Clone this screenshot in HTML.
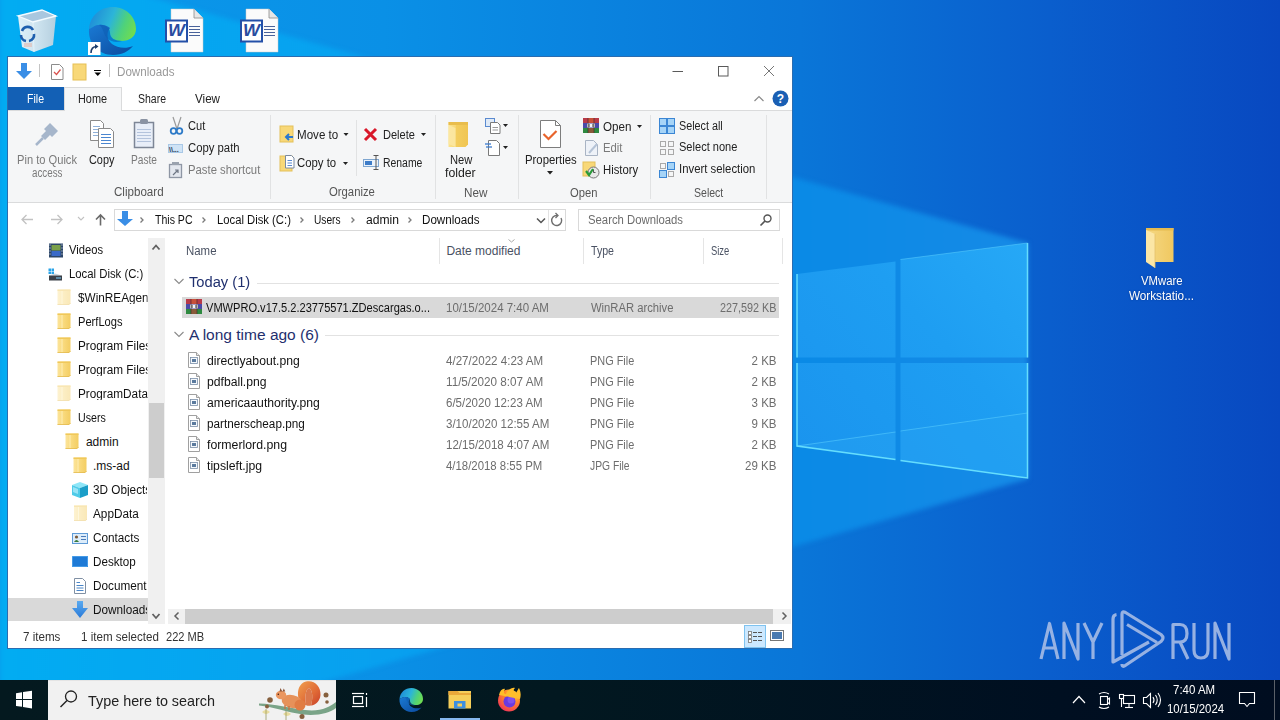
<!DOCTYPE html>
<html><head><meta charset="utf-8">
<style>
*{margin:0;padding:0;box-sizing:border-box}
html,body{width:1280px;height:720px;overflow:hidden;font-family:"Liberation Sans",sans-serif;font-size:12px;color:#000;background:#0a6fd6}
.a{position:absolute}
.t{position:absolute;white-space:nowrap;line-height:1;transform-origin:0 0}
svg.a{overflow:visible}
#bg{left:0;top:0;width:1280px;height:680px;background:#0a6ad6}
#win{left:7px;top:56px;width:786px;height:593px;background:#fff;border:1px solid #2a6cb0}
#filetab{left:8px;top:87px;width:56px;height:23px;background:#1360b5}
#hometab{left:64px;top:87px;width:58px;height:24px;background:#f5f6f7;border:1px solid #dadbdc;border-bottom:none}
#ribbon{left:8px;top:110px;width:784px;height:93px;background:#f5f6f7;border-top:1px solid #dadbdc;border-bottom:1px solid #dadbdc}
#hometabcover{left:65px;top:110px;width:56px;height:2px;background:#f5f6f7}
#navsb{left:148px;top:238px;width:17px;height:386px;background:#f0f0f0}
#navthumb{left:149px;top:403px;width:15px;height:75px;background:#cdcdcd}
#navsel{left:8px;top:598px;width:140px;height:23px;background:#d9d9d9}
#rowsel{left:182px;top:297px;width:597px;height:21px;background:#d9d9d9}
#hsb{left:168px;top:609px;width:623px;height:15px;background:#f0f0f0}
#hthumb{left:185px;top:609px;width:588px;height:15px;background:#cdcdcd}
#tb{left:0;top:680px;width:1280px;height:40px;background:linear-gradient(90deg,#04191f 0px,#021820 560px,#000f21 1060px,#000d20 1280px)}
</style></head><body>
<div id="bg" class="a"></div>

<svg class="a" style="left:0;top:0" width="1280" height="680" viewBox="0 0 1280 680">
<defs>
 <linearGradient id="pane" x1="0" y1="0" x2="1" y2="1">
  <stop offset="0" stop-color="#2cb2f8"/><stop offset="1" stop-color="#1890ee"/>
 </linearGradient>
 <linearGradient id="edge" x1="0" y1="0" x2="1" y2="0">
  <stop offset="0" stop-color="#1fa6f5"/><stop offset="1" stop-color="#1a8fe8"/>
 </linearGradient>
 <radialGradient id="glow" cx="880" cy="380" r="330" gradientUnits="userSpaceOnUse">
  <stop offset="0" stop-color="#3ab8ff" stop-opacity="0.45"/><stop offset="1" stop-color="#3ab8ff" stop-opacity="0"/>
 </radialGradient>
 <linearGradient id="edgeG" x1="0" y1="0" x2="0" y2="1">
  <stop offset="0" stop-color="#66e0ff"/><stop offset="1" stop-color="#4cc8ff"/>
 </linearGradient>
</defs>
<defs>
 <linearGradient id="outG" x1="0" y1="0" x2="1280" y2="0" gradientUnits="userSpaceOnUse">
  <stop offset="0" stop-color="#0a9aec"/><stop offset="0.3" stop-color="#0a90e6"/><stop offset="0.625" stop-color="#0a76d8"/><stop offset="0.82" stop-color="#0a5ecd"/><stop offset="1" stop-color="#0848c0"/>
 </linearGradient>
 <linearGradient id="inG" x1="0" y1="0" x2="1028" y2="0" gradientUnits="userSpaceOnUse">
  <stop offset="0" stop-color="#02acf2"/><stop offset="0.5" stop-color="#0a9cee"/><stop offset="0.78" stop-color="#0a8ae6"/><stop offset="1" stop-color="#168ae6"/>
 </linearGradient>
 <filter id="soft" x="-5%" y="-5%" width="110%" height="110%" color-interpolation-filters="sRGB"><feGaussianBlur stdDeviation="2.5"/></filter>
</defs>
<rect x="0" y="0" width="1280" height="680" fill="url(#outG)"/>
<polygon points="0,-45 1028,243 1028,479 0,775" fill="url(#inG)" filter="url(#soft)"/>
<!-- windows logo -->
<defs>
 <linearGradient id="paneG" x1="795" y1="460" x2="1028" y2="250" gradientUnits="userSpaceOnUse">
  <stop offset="0" stop-color="#1a94ee"/><stop offset="0.6" stop-color="#1e9ef2"/><stop offset="1" stop-color="#26a8f6"/>
 </linearGradient>
</defs>
<g>
<polygon points="797,274 895.5,261.5 895.5,357.5 797,357.5" fill="url(#paneG)"/>
<polygon points="900.5,259.5 1027.5,243 1027.5,357.5 900.5,357.5" fill="url(#paneG)"/>
<polygon points="797,363 895.5,363 895.5,459.5 797,446" fill="url(#paneG)"/>
<polygon points="900.5,363 1027.5,363 1027.5,478 900.5,460.5" fill="url(#paneG)"/>
<polygon points="797,446 895.5,432 895.5,459.5" fill="#2aa6f4" opacity="0.35"/>
<polygon points="900.5,431 1027.5,413 1027.5,478 900.5,460.5" fill="#2aa6f4" opacity="0.35"/>
<polyline points="797,446 895.5,432" stroke="#5fd4ff" stroke-width="1" fill="none" opacity="0.5"/>
<polyline points="900.5,431 1027.5,413" stroke="#5fd4ff" stroke-width="1" fill="none" opacity="0.5"/>
<g stroke="#6ee6ff" stroke-width="1.5" fill="none" opacity="0.9">
 <polyline points="797,274 797,357.5"/>
 <polyline points="797,363 797,446 895.5,459.5"/>
 <polyline points="1027.5,243 1027.5,357.5"/>
 <polyline points="1027.5,363 1027.5,478 900.5,460.5"/>
</g>
<polyline points="900.5,259.5 1027.5,243" stroke="#5fd4ff" stroke-width="1" fill="none" opacity="0.5"/>
</g>
<!-- recycle bin -->
<defs><linearGradient id="rbG" x1="0" y1="0" x2="1" y2="0"><stop offset="0" stop-color="#f2f6f9"/><stop offset="0.5" stop-color="#dfe8ef"/><stop offset="1" stop-color="#c4d2dd"/></linearGradient></defs>
<path d="M18,16 L42,10 L56,16 L53,45 L34,52 L22,47 Z" fill="url(#rbG)" opacity="0.92"/>
<path d="M18,16 L42,10 L56,16 L33,22 Z" fill="#a9c7df"/>
<path d="M18,16 L42,10 L56,16 L33,22 Z" fill="none" stroke="#f4fbff" stroke-width="1.3"/>
<path d="M33,22 L34,52" stroke="#f4fbff" stroke-width="0.8" opacity="0.7"/>
<path d="M22,31 A6,6 0 0 1 33,30" stroke="#1e5fae" stroke-width="2.6" fill="none"/>
<path d="M34,34 A6,6 0 0 1 29,41" stroke="#1e5fae" stroke-width="2.6" fill="none"/>
<path d="M26,41 A6,6 0 0 1 21,35" stroke="#1e5fae" stroke-width="2.6" fill="none"/>
<rect x="24" y="43" width="8" height="4" fill="#e8b0a0" opacity="0.5"/>
<!-- edge desktop -->
<defs>
 <linearGradient id="edA" x1="0" y1="0.3" x2="1" y2="0.6"><stop offset="0" stop-color="#1e8ad8"/><stop offset="0.45" stop-color="#2cb5d8"/><stop offset="0.75" stop-color="#4fd27a"/><stop offset="1" stop-color="#6fdc52"/></linearGradient>
 <linearGradient id="edB" x1="0" y1="0" x2="1" y2="1"><stop offset="0" stop-color="#1a7ad4"/><stop offset="1" stop-color="#0b4a9e"/></linearGradient>
 <g id="edgeIco">
  <path d="M1,22 C2,9 12,0 25,0 C38,0 48,10 48,22 C48,30 41,34 34,34 C27,34 22,31 22,26 C22,21 17,17 11,18 C6,19 2,22 1,22 Z" fill="url(#edA)"/>
  <path d="M1,22 C0,37 11,48 25,48 C34,48 41,44 45,39 C38,42 29,41 24,37 C19,33 18,26 22,21 C17,17 9,17 5,20 C3,21 1,22 1,22 Z" fill="url(#edB)"/>
  <path d="M11,18 C17,17 22,21 22,26 C22,31 27,34 34,34 C29,36 23,35 19,31 C15,27 16,21 11,18 Z" fill="#0e5fb4" opacity="0.6"/>
 </g>
</defs>
<use href="#edgeIco" x="88" y="7"/>
<rect x="88" y="42" width="12.5" height="13" fill="#fff"/>
<path d="M91,53 C91,48 93,46.5 97,46.5" stroke="#1c3c6c" stroke-width="1.6" fill="none"/>
<path d="M95,44 L98.5,46.5 L95,49 Z" fill="#1c3c6c"/>
<!-- word docs -->
<g id="wd1">
 <path d="M171,9 L194,9 L203,18 L203,52 L171,52 Z" fill="#fbfbfb" stroke="#c8c8c8" stroke-width="0.5"/>
 <path d="M194,9 L194,18 L203,18" fill="#e6e6e6" stroke="#8a8a8a" stroke-width="0.8"/>
 <rect x="166" y="20.5" width="21" height="21" fill="#fff" stroke="#2450a8" stroke-width="2"/>
 <text x="0" y="0" transform="translate(176.5,36.4) scale(1.12,1)" font-family="Liberation Sans" font-weight="bold" font-style="italic" font-size="16" fill="#2a4ca0" text-anchor="middle">W</text>
 <g stroke="#34508e" stroke-width="0.9"><line x1="189" y1="26.5" x2="200" y2="26.5"/><line x1="189" y1="29.5" x2="200" y2="29.5"/><line x1="189" y1="32.5" x2="200" y2="32.5"/><line x1="189" y1="35.5" x2="200" y2="35.5"/></g>
</g>
<use href="#wd1" x="75" y="0"/>
<!-- vmware folder -->
<defs><linearGradient id="vfG" x1="0" y1="0" x2="1" y2="0"><stop offset="0" stop-color="#f5d884"/><stop offset="1" stop-color="#f0c860"/></linearGradient></defs>
<path d="M1146,228 h27.5 v34 h-27.5 Z" fill="url(#vfG)"/>
<rect x="1146" y="228" width="27.5" height="2.5" fill="#e6bb50"/>
<path d="M1146,230 L1155,234 L1155,268 L1146,262 Z" fill="#fbe6a6"/>
<path d="M1155,234 L1155,268" stroke="#e4c06a" stroke-width="0.8"/>
<!-- anyrun -->
<g stroke="#a6bce6" stroke-width="3.2" fill="none" opacity="0.9" stroke-linejoin="round" stroke-linecap="butt">
 <path d="M1041,659 L1049.5,623.5 L1058,659 M1044.5,648 L1054.5,648"/>
 <path d="M1064,659 L1064,623 L1078,659 L1078,623"/>
 <path d="M1084,623 L1093,642 L1102,623 M1093,642 L1093,659"/>
 <path d="M1173,659 L1173,624.5 L1180,624.5 Q1187,624.5 1187,633.5 Q1187,642 1180,642 L1173,642 M1180,642 L1188,659"/>
 <path d="M1194,623 L1194,650 Q1194,658 1201,658 Q1208,658 1208,650 L1208,623"/>
 <path d="M1215,659 L1215,623 L1229,659 L1229,623"/>
 <path d="M1116.5,614.5 Q1113,615 1113,619 L1113,662 L1149,642"/>
 <path d="M1122,655 L1122,614 Q1122,610.5 1125.5,612.5 L1161,634.5 Q1165,638 1161,641.5 L1126,665 Q1122,668 1122,664"/>
 <path d="M1127,624.5 L1157,642.5"/>
</g>
</svg>

<div id="win" class="a"></div>
<div id="filetab" class="a"></div>
<div id="ribbon" class="a"></div>
<div id="hometab" class="a"></div>
<div id="hometabcover" class="a"></div>
<div id="navsb" class="a"></div>
<div id="navthumb" class="a"></div>
<div id="navsel" class="a"></div>
<div id="rowsel" class="a"></div>
<div id="hsb" class="a"></div>
<div id="hthumb" class="a"></div>
<div id="tb" class="a"></div>

<svg class="a" style="left:0;top:0" width="1280" height="720" viewBox="0 0 1280 720">
<!-- QAT -->
<path d="M21,63 h6 v8 h5 l-8,8 l-8,-8 h5 Z" fill="#3a8ee6"/>
<line x1="39.5" y1="64" x2="39.5" y2="77" stroke="#c4c4c4"/>
<path d="M51.5,64.5 h8 l3.5,3.5 v11.5 h-11.5 Z" fill="#fff" stroke="#8c8c8c"/>
<path d="M54,72 l2.5,2.5 l4,-5" stroke="#d9534f" stroke-width="1.3" fill="none"/>
<rect x="73" y="64" width="13" height="16" fill="#f8d878"/>
<rect x="73" y="64" width="13" height="16" fill="none" stroke="#e6bf55" stroke-width="1"/>
<line x1="94" y1="70.5" x2="101" y2="70.5" stroke="#000"/>
<path d="M94.5,72.5 h6.5 l-3.25,3.5 Z" fill="#000"/>
<line x1="109.5" y1="64" x2="109.5" y2="77" stroke="#c4c4c4"/>
<!-- title controls -->
<line x1="672.5" y1="71.5" x2="683" y2="71.5" stroke="#5a5a5a"/>
<rect x="718.5" y="66.5" width="9.5" height="9.5" fill="none" stroke="#5a5a5a"/>
<path d="M764,66 L774,76 M774,66 L764,76" stroke="#666" stroke-width="0.9"/>
<!-- collapse + help -->
<path d="M754.5,101 L759,96.5 L763.5,101" stroke="#8a8a8a" stroke-width="1.2" fill="none"/>
<circle cx="780.5" cy="98.5" r="8" fill="#1a5fb4"/>
<text x="780.5" y="103" font-family="Liberation Sans" font-weight="bold" font-size="12" fill="#fff" text-anchor="middle">?</text>
<!-- ribbon group separators -->
<g stroke="#e1e2e3">
 <line x1="270.5" y1="115" x2="270.5" y2="199"/>
 <line x1="435.5" y1="115" x2="435.5" y2="199"/>
 <line x1="518.5" y1="115" x2="518.5" y2="199"/>
 <line x1="650.5" y1="115" x2="650.5" y2="199"/>
 <line x1="766.5" y1="115" x2="766.5" y2="199"/>
 <line x1="356.5" y1="120" x2="356.5" y2="176"/>
</g>
<!-- pin -->
<path d="M44,129 L50,123 L58,131 L52,137 L50,135 L45,140 L41,136 L46,131 Z" fill="#a6b6cb"/>
<path d="M43,138 L36,145" stroke="#a6b6cb" stroke-width="2.5"/>
<!-- copy -->
<path d="M90.5,120.5 h10 l3,3 v17 h-13 Z" fill="#fff" stroke="#8a8a8a"/>
<g stroke="#8fb0d8" stroke-width="1"><line x1="93" y1="126.5" x2="100" y2="126.5"/><line x1="93" y1="129.5" x2="100" y2="129.5"/><line x1="93" y1="132.5" x2="100" y2="132.5"/><line x1="93" y1="135.5" x2="100" y2="135.5"/></g>
<path d="M98.5,128.5 h12 l3,3 v16 h-15 Z" fill="#fff" stroke="#8a8a8a"/>
<g stroke="#4a86d0" stroke-width="1"><line x1="101" y1="134.5" x2="111" y2="134.5"/><line x1="101" y1="137.5" x2="111" y2="137.5"/><line x1="101" y1="140.5" x2="111" y2="140.5"/><line x1="101" y1="143.5" x2="111" y2="143.5"/></g>
<!-- paste -->
<rect x="134.5" y="122.5" width="19" height="25" fill="#e8eef8" stroke="#7d8696" stroke-width="1.5"/>
<rect x="140" y="119" width="8" height="5" rx="1.5" fill="#8a93a3"/>
<g stroke="#b3c3dc"><line x1="137" y1="129.5" x2="151" y2="129.5"/><line x1="137" y1="132.5" x2="151" y2="132.5"/><line x1="137" y1="135.5" x2="151" y2="135.5"/><line x1="137" y1="138.5" x2="151" y2="138.5"/><line x1="137" y1="141.5" x2="151" y2="141.5"/></g>
<!-- cut -->
<path d="M173,117 L177,129 M181,117 L177,129" stroke="#9a9a9a" stroke-width="1.2"/>
<circle cx="173.5" cy="131" r="2.8" fill="none" stroke="#2e7bc8" stroke-width="1.8"/>
<circle cx="179.5" cy="131" r="2.8" fill="none" stroke="#2e7bc8" stroke-width="1.8"/>
<!-- copy path -->
<rect x="168.5" y="144.5" width="14" height="8" fill="#cfe3f5" stroke="#a9c8e6"/>
<text x="169" y="151.5" font-family="Liberation Sans" font-weight="bold" font-size="7" fill="#1d3550">\\...</text>
<!-- paste shortcut -->
<rect x="169.5" y="164.5" width="12" height="13" fill="#e3e7ee" stroke="#8e96a4" stroke-width="1.3"/>
<rect x="172" y="162" width="7" height="3" fill="#9aa2ae"/>
<path d="M173,175 L178,170 M175,170 h3 v3" stroke="#6e7684" stroke-width="1.2" fill="none"/>
<!-- move to -->
<rect x="280" y="126" width="13" height="16" fill="#f8d878" stroke="#e4c05a"/>
<path d="M293,137 h-7 M289,134 l-3,3 l3,3" stroke="#2a78d0" stroke-width="2" fill="none"/>
<path d="M343.5,133 h5 l-2.5,3 Z" fill="#222"/>
<!-- copy to -->
<rect x="280" y="156" width="12" height="15" fill="#f8d878" stroke="#e4c05a"/>
<path d="M285.5,155.5 h6 l2.5,2.5 v10 h-8.5 Z" fill="#fff" stroke="#7a8aa0"/>
<g stroke="#5a8ad0"><line x1="287.5" y1="160.5" x2="292" y2="160.5"/><line x1="287.5" y1="163" x2="292" y2="163"/><line x1="287.5" y1="165.5" x2="292" y2="165.5"/></g>
<path d="M343,162 h5 l-2.5,3 Z" fill="#222"/>
<!-- delete -->
<path d="M365,129 L376,140 M376,129 L365,140" stroke="#d9182a" stroke-width="3"/>
<path d="M421,133 h5 l-2.5,3 Z" fill="#222"/>
<!-- rename -->
<rect x="363.5" y="159.5" width="15" height="7" fill="#eaf2fb" stroke="#7fa6d0"/>
<rect x="365" y="161" width="7" height="4" fill="#3d7cc8"/>
<path d="M376,155 v15 M373.5,155.5 h5 M373.5,169.5 h5" stroke="#555" stroke-width="1"/>
<!-- new folder -->
<defs><linearGradient id="nfG" x1="0" y1="0" x2="1" y2="0"><stop offset="0" stop-color="#fbe38e"/><stop offset="0.35" stop-color="#f7d877"/><stop offset="0.4" stop-color="#f3cd5e"/><stop offset="1" stop-color="#f0c552"/></linearGradient></defs>
<path d="M448.5,122 h19.5 v22.5 l-2.5,2.5 h-17 Z" fill="url(#nfG)"/>
<rect x="448.5" y="122" width="19.5" height="3" fill="#e9bd4c"/>
<path d="M448.5,125 L455.5,128 L455.5,147 L448.5,144 Z" fill="#fce8a4" opacity="0.85"/>
<!-- new item -->
<rect x="485.5" y="118.5" width="9" height="8" fill="#dfeaf7" stroke="#5a8ad0"/>
<path d="M490.5,122.5 h7 l2.5,2.5 v8.5 h-9.5 Z" fill="#fff" stroke="#7a7a7a"/>
<g stroke="#999"><line x1="492.5" y1="127.5" x2="498" y2="127.5"/><line x1="492.5" y1="130" x2="498" y2="130"/></g>
<path d="M503,124 h5 l-2.5,3 Z" fill="#222"/>
<!-- easy access -->
<path d="M488.5,140.5 h8 l3,3 v12 h-11 Z" fill="#fff" stroke="#7a7a7a"/>
<g stroke="#3a7ad0" stroke-width="1.3"><line x1="485" y1="144" x2="491" y2="144"/><line x1="486" y1="147" x2="492" y2="147"/></g>
<path d="M503,146 h5 l-2.5,3 Z" fill="#222"/>
<!-- properties -->
<path d="M540.5,120.5 h15 l5,5 v22 h-20 Z" fill="#fff" stroke="#7d7d7d"/>
<path d="M555.5,120.5 v5 h5" fill="none" stroke="#7d7d7d"/>
<path d="M543.5,134 l5,5 l8,-8" stroke="#e8642c" stroke-width="2.2" fill="none"/>
<path d="M547,171 h6 l-3,3.5 Z" fill="#222"/>
<!-- winrar open -->
<defs><g id="rar">
 <rect x="0" y="0" width="16" height="5" fill="#b83a48"/>
 <rect x="0" y="5" width="16" height="5" fill="#4a4aa8"/>
 <rect x="0" y="10" width="16" height="5" fill="#2e8a40"/>
 <rect x="5" y="0" width="6" height="5" fill="#c8503a"/>
 <rect x="5" y="10" width="6" height="5" fill="#8a5a3a"/>
 <rect x="4" y="5.5" width="8" height="4" fill="#f4f4f4"/>
 <rect x="5.5" y="6" width="1" height="3" fill="#333"/><rect x="9.5" y="6" width="1" height="3" fill="#333"/>
 <path d="M5,0 v15 M11,0 v15" stroke="#3a2a2a" stroke-width="0.6"/>
</g></defs>
<use href="#rar" x="583" y="118"/>
<path d="M637,125 h5 l-2.5,3 Z" fill="#222"/>
<!-- edit -->
<path d="M585.5,140.5 h8 l4,4 v11 h-12 Z" fill="#eef2f8" stroke="#a9b4c4"/>
<path d="M589,153 L597,144" stroke="#b5c3d6" stroke-width="2"/>
<!-- history -->
<rect x="583" y="162" width="12" height="14" fill="#f8d878" stroke="#e4c05a"/>
<circle cx="593.5" cy="172.5" r="5.5" fill="#e8e8e8" stroke="#777" stroke-width="1"/>
<path d="M593.5,169.5 v3 h2" stroke="#555" fill="none"/>
<path d="M586,171 l3,4 l4,-6" stroke="#2a9a3a" stroke-width="2.2" fill="none"/>
<!-- select all -->
<g fill="#a6d4f7" stroke="#3b86d4"><rect x="659.5" y="118.5" width="7" height="7"/><rect x="667.5" y="118.5" width="7" height="7"/><rect x="659.5" y="126.5" width="7" height="7"/><rect x="667.5" y="126.5" width="7" height="7"/></g>
<g fill="none" stroke="#a9a9a9"><rect x="660.5" y="141.5" width="5" height="5"/><rect x="668.5" y="141.5" width="5" height="5"/><rect x="660.5" y="149.5" width="5" height="5"/><rect x="668.5" y="149.5" width="5" height="5"/></g>
<g fill="#a6d4f7" stroke="#3b86d4"><rect x="667.5" y="162.5" width="7" height="7"/><rect x="659.5" y="170.5" width="7" height="7"/></g>
<g fill="none" stroke="#a9a9a9"><rect x="660.5" y="163.5" width="5" height="5"/><rect x="668.5" y="171.5" width="5" height="5"/></g>
<!-- address row -->
<path d="M22,219.5 h11 M26.5,215 l-4.5,4.5 l4.5,4.5" stroke="#c2c2c2" stroke-width="1.3" fill="none"/>
<path d="M51,219.5 h11 M57.5,215 l4.5,4.5 l-4.5,4.5" stroke="#c2c2c2" stroke-width="1.3" fill="none"/>
<path d="M78,217 l3,3 l3,-3" stroke="#c2c2c2" stroke-width="1.1" fill="none"/>
<path d="M100.5,225.5 v-10 M96,219.5 l4.5,-4.5 l4.5,4.5" stroke="#6a6a6a" stroke-width="1.6" fill="none"/>
<rect x="114.5" y="209.5" width="451" height="21" fill="none" stroke="#d9d9d9"/>
<line x1="548.5" y1="210" x2="548.5" y2="230" stroke="#e3e3e3"/>
<path d="M122,211 h6 v8 h5 l-8,7 l-8,-7 h5 Z" fill="#3a8ee6"/>
<g stroke="#7a7a7a" stroke-width="1.3" fill="none">
 <path d="M140.5,217.5 l2.5,2.5 l-2.5,2.5"/><path d="M202.5,217.5 l2.5,2.5 l-2.5,2.5"/><path d="M300.5,217.5 l2.5,2.5 l-2.5,2.5"/><path d="M351.5,217.5 l2.5,2.5 l-2.5,2.5"/><path d="M408.5,217.5 l2.5,2.5 l-2.5,2.5"/>
</g>
<path d="M537,218.5 l4,4 l4,-4" stroke="#555" stroke-width="1.5" fill="none"/>
<path d="M561,218 A5,5 0 1 1 557,215.5" stroke="#6e6e6e" stroke-width="1.4" fill="none"/>
<path d="M555.5,213 l2.5,2.5 l-2.5,2.5" stroke="#6e6e6e" stroke-width="1.3" fill="none"/>
<rect x="578.5" y="209.5" width="201" height="21" fill="none" stroke="#d9d9d9"/>
<circle cx="767.5" cy="218.5" r="3.5" fill="none" stroke="#555" stroke-width="1.4"/>
<path d="M765,221 L760.5,225.5" stroke="#555" stroke-width="1.6"/>
<!-- column header separators -->
<g stroke="#e5e5e5"><line x1="439.5" y1="238" x2="439.5" y2="264"/><line x1="583.5" y1="238" x2="583.5" y2="264"/><line x1="703.5" y1="238" x2="703.5" y2="264"/><line x1="782.5" y1="238" x2="782.5" y2="264"/></g>
<path d="M508.5,239.5 l3,2.5 l3,-2.5" stroke="#aaa" fill="none"/>
<!-- group headers -->
<path d="M174.5,279 l4.5,4.5 l4.5,-4.5" stroke="#8a8a8a" stroke-width="1.1" fill="none"/>
<line x1="257" y1="283.5" x2="779" y2="283.5" stroke="#e2e2e2"/>
<path d="M174.5,332 l4.5,4.5 l4.5,-4.5" stroke="#8a8a8a" stroke-width="1.1" fill="none"/>
<line x1="325" y1="335.5" x2="779" y2="335.5" stroke="#e2e2e2"/>
<!-- winrar row icon -->
<use href="#rar" x="186" y="299"/>
<!-- file icons -->
<g id="fic">
 <path d="M188.5,352.5 h8 l3,3 v12 h-11 Z" fill="#fff" stroke="#a0a0a0"/>
 <path d="M196.5,352.5 v3 h3" fill="#e8e8e8" stroke="#a0a0a0"/>
 <rect x="190.5" y="357.5" width="7" height="6" fill="#f4f8fc" stroke="#7a8ea8" stroke-width="0.8"/>
 <rect x="192" y="359" width="4" height="3" fill="#5a7a9e"/>
</g>
<use href="#fic" y="21"/><use href="#fic" y="42"/><use href="#fic" y="63"/><use href="#fic" y="84"/><use href="#fic" y="105"/>
<!-- nav scrollbar arrows -->
<path d="M152.5,249.5 l3.5,-4 l3.5,4" stroke="#606060" stroke-width="1.8" fill="none"/>
<path d="M152.5,614 l3.5,4 l3.5,-4" stroke="#606060" stroke-width="1.8" fill="none"/>
<!-- h scrollbar arrows -->
<path d="M178.5,612.5 l-3.5,3.5 l3.5,3.5" stroke="#606060" stroke-width="1.5" fill="none"/>
<path d="M782.5,612.5 l3.5,3.5 l-3.5,3.5" stroke="#606060" stroke-width="1.5" fill="none"/>
<!-- nav icons -->
<defs>
 <linearGradient id="fldG" x1="0" y1="0" x2="1" y2="0"><stop offset="0" stop-color="#fce49a"/><stop offset="0.45" stop-color="#f9da7e"/><stop offset="1" stop-color="#f3cd62"/></linearGradient>
 <g id="fld">
  <path d="M0,0 h13 v14 l-1.5,1.5 h-11.5 Z" fill="url(#fldG)"/>
  <path d="M0,0 h13 v1.5 h-13 Z" fill="#f0c85a"/>
  <path d="M4.5,1.5 v13.5" stroke="#fff2c0" stroke-width="0.8"/>
  <path d="M0,15 h11.5 l1.5,-1.5" stroke="#e3bb52" stroke-width="0.8" fill="none"/>
 </g>
 <g id="fldp" opacity="0.45"><use href="#fld"/></g>
</defs>
<!-- videos -->
<rect x="49" y="243.5" width="14" height="14" fill="#2d4668"/>
<rect x="51.5" y="245" width="9" height="5.5" fill="#7aa04a"/>
<rect x="51.5" y="251" width="9" height="5" fill="#3a6ac8"/>
<g fill="#e8eef5"><rect x="49.5" y="244.5" width="1" height="1"/><rect x="49.5" y="247.5" width="1" height="1"/><rect x="49.5" y="250.5" width="1" height="1"/><rect x="49.5" y="253.5" width="1" height="1"/><rect x="61.5" y="244.5" width="1" height="1"/><rect x="61.5" y="247.5" width="1" height="1"/><rect x="61.5" y="250.5" width="1" height="1"/><rect x="61.5" y="253.5" width="1" height="1"/></g>
<!-- local disk -->
<g fill="#29a3e8"><rect x="48.5" y="268.5" width="2.5" height="2.5"/><rect x="51.5" y="268.5" width="2.5" height="2.5"/><rect x="48.5" y="271.5" width="2.5" height="2.5"/><rect x="51.5" y="271.5" width="2.5" height="2.5"/></g>
<path d="M49,275.5 L55,273.5 L62,275.5 Z" fill="#c9d3dc"/>
<rect x="49" y="275.5" width="13" height="5" fill="#3b4048"/>
<rect x="56" y="277.5" width="5" height="1" fill="#7fd0ff"/>
<use href="#fldp" x="57.5" y="289.5"/>
<use href="#fld" x="57.5" y="313.5"/>
<use href="#fld" x="57.5" y="337.5"/>
<use href="#fld" x="57.5" y="361.5"/>
<use href="#fldp" x="57.5" y="385.5"/>
<use href="#fld" x="57.5" y="409.5"/>
<use href="#fld" x="65.5" y="433.5"/>
<use href="#fld" x="73.5" y="457.5"/>
<use href="#fldp" x="74" y="505.5"/>
<!-- 3d objects -->
<path d="M72,485 L80,482 L88,485 L80,488 Z" fill="#8ee6f8"/>
<path d="M72,485 L80,488 L80,498 L72,495 Z" fill="#4fcbe8"/>
<path d="M80,488 L88,485 L88,495 L80,498 Z" fill="#1a9ec8"/>
<path d="M73,487 L78,489 L78,494 L73,492 Z" fill="#c8f4ff" opacity="0.6"/>
<!-- contacts -->
<rect x="72.5" y="533.5" width="15" height="10" fill="#dcecfa" stroke="#5e9ad6"/>
<circle cx="76.5" cy="537" r="1.6" fill="#7a5a3a"/>
<path d="M74,542 q2.5,-4 5,0 Z" fill="#3a7a3a"/>
<g stroke="#4a7ab8"><line x1="81" y1="536.5" x2="86" y2="536.5"/><line x1="81" y1="539.5" x2="86" y2="539.5"/></g>
<!-- desktop -->
<rect x="72" y="556" width="16" height="11" fill="#1e7ad6"/>
<rect x="72.5" y="556.5" width="15" height="10" fill="none" stroke="#5fb0f0" stroke-width="0.6"/>
<!-- documents -->
<path d="M74.5,578.5 h8 l3,3 v12 h-11 Z" fill="#fff" stroke="#8090a4"/>
<g stroke="#4a86c8"><line x1="76.5" y1="582.5" x2="80" y2="582.5"/><line x1="76.5" y1="585.5" x2="83.5" y2="585.5"/><line x1="76.5" y1="588" x2="83.5" y2="588"/><line x1="76.5" y1="590.5" x2="83.5" y2="590.5"/></g>
<!-- downloads arrow -->
<defs><linearGradient id="dlG" x1="0" y1="0" x2="0" y2="1"><stop offset="0" stop-color="#5aaaf0"/><stop offset="1" stop-color="#2a7ad8"/></linearGradient></defs>
<path d="M77,601 h6 v7 h5 l-8,10 l-8,-10 h5 Z" fill="url(#dlG)"/>
<!-- view buttons -->
<rect x="744.5" y="625.5" width="21" height="22" fill="#cce8ff" stroke="#7fc3f0"/>
<g fill="#fff" stroke="#777" stroke-width="0.8"><rect x="748.5" y="631.5" width="3" height="3"/><rect x="748.5" y="635.5" width="3" height="3"/><rect x="748.5" y="639.5" width="3" height="3"/></g>
<g stroke="#555"><line x1="753" y1="632.5" x2="757" y2="632.5"/><line x1="758" y1="632.5" x2="762" y2="632.5"/><line x1="753" y1="636.5" x2="757" y2="636.5"/><line x1="758" y1="636.5" x2="762" y2="636.5"/><line x1="753" y1="640.5" x2="757" y2="640.5"/><line x1="758" y1="640.5" x2="762" y2="640.5"/></g>
<rect x="770.5" y="630.5" width="13" height="10" fill="#fff" stroke="#777"/>
<rect x="772" y="632" width="10" height="7" fill="#4a7ab0"/>
</svg>

<svg class="a" style="left:0;top:680px" width="1280" height="40" viewBox="0 680 1280 40">
<g fill="#fff"><polygon points="16,693.2 22,692.3 22,699 16,699"/><polygon points="23,692.1 32,690.8 32,699 23,699"/><polygon points="16,700 22,700 22,706.8 16,706"/><polygon points="23,700 32,700 32,708.4 23,707.1"/></g>
<rect x="48" y="680" width="288" height="40" fill="#f1f1f1"/>
<rect x="48" y="680" width="288" height="1" fill="#e4e4e4"/>
<circle cx="71" cy="696.5" r="5.5" fill="none" stroke="#222" stroke-width="1.3"/>
<path d="M67,700.5 L60.5,707" stroke="#222" stroke-width="1.4"/>
<!-- squirrel doodle -->
<defs><linearGradient id="tailG" x1="0" y1="0" x2="1" y2="1"><stop offset="0" stop-color="#f0a050"/><stop offset="0.6" stop-color="#e06a36"/><stop offset="1" stop-color="#c8402a"/></linearGradient></defs>
<path d="M259,703.5 C275,704 290,708 305,710 C320,712 330,707 336,702 L336,708 C330,713 318,716 303,714.5 C288,712.5 274,707 259,705.5 Z" fill="#7aa488"/>
<path d="M301,704 C296,696 297,684 306,681.5 C314,679.5 321,686 320.5,695 C320,701 316,705 311,705.5 C313,699 313,690 309,688 C305,690 305,698 306,705 Z" fill="url(#tailG)"/>
<path d="M309,688 C313,690 313,699 311,705.5 C308,706 306,705.5 306,705 C305,698 305,690 309,688 Z" fill="#d86a3a" opacity="0.9"/>
<ellipse cx="292" cy="701.5" rx="10.5" ry="6.5" fill="#e6915a" transform="rotate(12 292 701.5)"/>
<circle cx="300" cy="705" r="5.5" fill="#e07c44"/>
<ellipse cx="281" cy="695" rx="5.2" ry="4.2" fill="#ea9660"/>
<path d="M279.5,691.5 l1,-3.5 l1.8,3.5 Z M282.5,691.5 l1.3,-3 l1.5,3 Z" fill="#8a5438"/>
<circle cx="278.3" cy="694.3" r="0.8" fill="#3a1a10"/>
<path d="M285,705 v4 M289,706 v4" stroke="#c87040" stroke-width="1.3"/>
<circle cx="270" cy="700" r="2.8" fill="#86603e"/><circle cx="267" cy="706.5" r="2" fill="#86603e"/><circle cx="326" cy="695" r="2.5" fill="#86603e"/><circle cx="302" cy="716.5" r="2.5" fill="#86603e"/><circle cx="327" cy="702" r="1.8" fill="#86603e"/>
<path d="M262,712 q4,-4 8,0 q-4,4 -8,0 Z M283,714 q4,-4 8,0 q-4,4 -8,0 Z" fill="#e6d890" opacity="0.85"/>
<path d="M266,709 v11 M286,711 v9" stroke="#9a9a60" stroke-width="0.8"/>
<!-- task view -->
<g stroke="#fff" stroke-width="1.2" fill="none"><rect x="353.5" y="696.5" width="9" height="7"/><line x1="352" y1="693.5" x2="364" y2="693.5"/><line x1="352" y1="706.5" x2="364" y2="706.5"/><line x1="366.5" y1="693" x2="366.5" y2="695"/><line x1="366.5" y1="697" x2="366.5" y2="707"/></g>
<!-- edge taskbar -->
<use href="#edgeIco" transform="translate(399,688) scale(0.5)"/>
<!-- explorer -->
<rect x="448.5" y="691" width="22.5" height="17.5" fill="#f6cf5a"/>
<path d="M448.5,691 h9 l2,2 h11.5 v2 h-22.5 Z" fill="#e9a93a"/>
<rect x="454" y="701" width="11.5" height="7.5" fill="#3d8fe0"/>
<rect x="457.5" y="703.5" width="4.5" height="3" fill="#f6cf5a"/>
<rect x="440" y="718" width="40" height="2" fill="#86b8ee"/>
<!-- firefox -->
<defs><radialGradient id="ffG" cx="0.7" cy="0.2" r="0.9"><stop offset="0" stop-color="#ffd43a"/><stop offset="0.45" stop-color="#ff8a2a"/><stop offset="1" stop-color="#f0305a"/></radialGradient></defs>
<circle cx="509" cy="700.5" r="11" fill="url(#ffG)"/>
<circle cx="509.5" cy="701.5" r="6" fill="#6a3ae0"/>
<circle cx="511" cy="700" r="3.5" fill="#8a5af0" opacity="0.7"/>
<path d="M499,695 C500,690 503,688 505,689 C503,692 504,694 506,694 C508,689 513,687 515,688 C513,690 513,692 516,693 C518,690 518,689 519,688 C521,692 521,696 520,699 Z" fill="#ffbe2a"/>
<!-- tray -->
<path d="M1073,703 l6,-6.5 l6,6.5" stroke="#fff" stroke-width="1.2" fill="none"/>
<g stroke="#fff" stroke-width="1.1" fill="none">
 <rect x="1100.5" y="696.5" width="7" height="8"/><path d="M1107.5,699.5 l2,-1.5 v6 l-2,-1.5"/>
 <path d="M1099,694 q5,-3 10,0 M1099,707 q5,3 10,0"/>
 <rect x="1123.5" y="695.5" width="11" height="8"/><line x1="1129" y1="704" x2="1129" y2="707"/><line x1="1125" y1="707.5" x2="1133" y2="707.5"/>
 <rect x="1119.5" y="694.5" width="4" height="4"/><line x1="1121.5" y1="699" x2="1121.5" y2="707"/>
 <path d="M1143.5,697.5 h3 l4,-4 v14 l-4,-4 h-3 Z"/>
 <path d="M1153,697 q2,3 0,6 M1155.5,695 q3.5,5 0,10 M1158,693 q5,7 0,14"/>
 <path d="M1239.5,692.5 h15 v11 h-5 l-2.5,3 l-2.5,-3 h-5 Z"/>
</g>
<line x1="1274.5" y1="680" x2="1274.5" y2="720" stroke="#5a6068"/>
</svg>

<div class="t" id="t0" style="left:117px;top:65.84px;font-size:12px;color:#9a9a9a;transform:scaleX(0.9684);">Downloads</div>
<div class="t" id="t1" style="left:27px;top:92.84px;font-size:12px;color:#fff;transform:scaleX(0.8788);">File</div>
<div class="t" id="t2" style="left:78px;top:92.84px;font-size:12px;color:#222;transform:scaleX(0.9058);">Home</div>
<div class="t" id="t3" style="left:137.5px;top:92.84px;font-size:12px;color:#222;transform:scaleX(0.8741);">Share</div>
<div class="t" id="t4" style="left:195px;top:92.84px;font-size:12px;color:#222;transform:scaleX(0.9691);">View</div>
<div class="t" id="t5" style="left:16.75px;top:153.84px;font-size:12px;color:#7a7a7a;transform:scaleX(0.9273);">Pin to Quick</div>
<div class="t" id="t6" style="left:31.75px;top:166.84px;font-size:12px;color:#7a7a7a;transform:scaleX(0.8164);">access</div>
<div class="t" id="t7" style="left:88.6px;top:153.84px;font-size:12px;color:#222;transform:scaleX(0.9066);">Copy</div>
<div class="t" id="t8" style="left:130.5px;top:153.84px;font-size:12px;color:#7a7a7a;transform:scaleX(0.8473);">Paste</div>
<div class="t" id="t9" style="left:187.7px;top:119.84px;font-size:12px;color:#222;transform:scaleX(0.9258);">Cut</div>
<div class="t" id="t10" style="left:187.7px;top:141.84px;font-size:12px;color:#222;transform:scaleX(0.9433);">Copy path</div>
<div class="t" id="t11" style="left:187.7px;top:163.84px;font-size:12px;color:#7a7a7a;transform:scaleX(0.9424);">Paste shortcut</div>
<div class="t" id="t12" style="left:113.7px;top:186.34px;font-size:12px;color:#555;transform:scaleX(0.9655);">Clipboard</div>
<div class="t" id="t13" style="left:297.2px;top:128.84px;font-size:12px;color:#222;transform:scaleX(0.9652);">Move to</div>
<div class="t" id="t14" style="left:297.2px;top:157.34px;font-size:12px;color:#222;transform:scaleX(0.9478);">Copy to</div>
<div class="t" id="t15" style="left:382.6px;top:128.84px;font-size:12px;color:#222;transform:scaleX(0.9196);">Delete</div>
<div class="t" id="t16" style="left:382.6px;top:157.34px;font-size:12px;color:#222;transform:scaleX(0.8686);">Rename</div>
<div class="t" id="t17" style="left:328.5px;top:186.34px;font-size:12px;color:#555;transform:scaleX(0.9424);">Organize</div>
<div class="t" id="t18" style="left:449.6px;top:154.34px;font-size:12px;color:#222;transform:scaleX(0.9327);">New</div>
<div class="t" id="t19" style="left:445.3px;top:166.84px;font-size:12px;color:#222;transform:scaleX(1.0223);">folder</div>
<div class="t" id="t20" style="left:464px;top:186.84px;font-size:12px;color:#555;transform:scaleX(0.9744);">New</div>
<div class="t" id="t21" style="left:525px;top:154.34px;font-size:12px;color:#222;transform:scaleX(0.9451);">Properties</div>
<div class="t" id="t22" style="left:602.5px;top:120.54px;font-size:12px;color:#222;transform:scaleX(0.9673);">Open</div>
<div class="t" id="t23" style="left:602.5px;top:142.34px;font-size:12px;color:#7a7a7a;transform:scaleX(0.9426);">Edit</div>
<div class="t" id="t24" style="left:602.5px;top:163.64px;font-size:12px;color:#222;transform:scaleX(0.9426);">History</div>
<div class="t" id="t25" style="left:570px;top:186.84px;font-size:12px;color:#555;transform:scaleX(0.9333);">Open</div>
<div class="t" id="t26" style="left:678.6px;top:119.54px;font-size:12px;color:#222;transform:scaleX(0.8973);">Select all</div>
<div class="t" id="t27" style="left:678.6px;top:141.34px;font-size:12px;color:#222;transform:scaleX(0.9213);">Select none</div>
<div class="t" id="t28" style="left:678.6px;top:163.34px;font-size:12px;color:#222;transform:scaleX(0.9465);">Invert selection</div>
<div class="t" id="t29" style="left:693.7px;top:186.84px;font-size:12px;color:#555;transform:scaleX(0.8783);">Select</div>
<div class="t" id="t30" style="left:155.3px;top:213.84px;font-size:12px;color:#111;transform:scaleX(0.8785);">This PC</div>
<div class="t" id="t31" style="left:216.5px;top:213.84px;font-size:12px;color:#111;transform:scaleX(0.9392);">Local Disk (C:)</div>
<div class="t" id="t32" style="left:314.4px;top:213.84px;font-size:12px;color:#111;transform:scaleX(0.8487);">Users</div>
<div class="t" id="t33" style="left:365.5px;top:213.84px;font-size:12px;color:#111;transform:scaleX(1.0096);">admin</div>
<div class="t" id="t34" style="left:422.3px;top:213.84px;font-size:12px;color:#111;transform:scaleX(0.9684);">Downloads</div>
<div class="t" id="t35" style="left:587.8px;top:213.84px;font-size:12px;color:#6d6d6d;transform:scaleX(0.9431);">Search Downloads</div>
<div class="t" id="t36" style="left:185.5px;top:244.84px;font-size:12px;color:#4a5263;transform:scaleX(0.9527);">Name</div>
<div class="t" id="t37" style="left:446.4px;top:244.84px;font-size:12px;color:#4a5263;">Date modified</div>
<div class="t" id="t38" style="left:590.8px;top:244.84px;font-size:12px;color:#4a5263;transform:scaleX(0.8841);">Type</div>
<div class="t" id="t39" style="left:710.7px;top:244.84px;font-size:12px;color:#4a5263;transform:scaleX(0.7839);">Size</div>
<div class="t" id="t40" style="left:188.75px;top:273.88px;font-size:15.5px;color:#1f2f6e;transform:scaleX(0.9478);">Today (1)</div>
<div class="t" id="t41" style="left:188.9px;top:326.88px;font-size:15.5px;color:#1f2f6e;">A long time ago (6)</div>
<div class="t" id="t42" style="left:205.5px;top:301.84px;font-size:12px;color:#111;transform:scaleX(0.9226);">VMWPRO.v17.5.2.23775571.ZDescargas.o...</div>
<div class="t" id="t43" style="left:446.4px;top:301.84px;font-size:12px;color:#6d6d6d;transform:scaleX(0.9579);">10/15/2024 7:40 AM</div>
<div class="t" id="t44" style="left:590.8px;top:301.84px;font-size:12px;color:#6d6d6d;transform:scaleX(0.9372);">WinRAR archive</div>
<div class="t" id="t45" style="left:700px;top:301.84px;font-size:12px;color:#6d6d6d;transform:scaleX(0.9000);width:76.5px;text-align:right;transform-origin:100% 0;">227,592 KB</div>
<div class="t" id="t46" style="left:206.7px;top:355.34px;font-size:12px;color:#111;transform:scaleX(1.0152);">directlyabout.png</div>
<div class="t" id="t47" style="left:446.2px;top:355.34px;font-size:12px;color:#6d6d6d;transform:scaleX(0.9648);">4/27/2022 4:23 AM</div>
<div class="t" id="t48" style="left:590.2px;top:355.34px;font-size:12px;color:#6d6d6d;transform:scaleX(0.9078);">PNG File</div>
<div class="t" id="t49" style="left:700px;top:355.34px;font-size:12px;color:#6d6d6d;transform:scaleX(0.9600);width:76.5px;text-align:right;transform-origin:100% 0;">2 KB</div>
<div class="t" id="t50" style="left:206.7px;top:376.34px;font-size:12px;color:#111;transform:scaleX(1.0133);">pdfball.png</div>
<div class="t" id="t51" style="left:446.2px;top:376.34px;font-size:12px;color:#6d6d6d;transform:scaleX(0.9734);">11/5/2020 8:07 AM</div>
<div class="t" id="t52" style="left:590.2px;top:376.34px;font-size:12px;color:#6d6d6d;transform:scaleX(0.9078);">PNG File</div>
<div class="t" id="t53" style="left:700px;top:376.34px;font-size:12px;color:#6d6d6d;transform:scaleX(0.9600);width:76.5px;text-align:right;transform-origin:100% 0;">2 KB</div>
<div class="t" id="t54" style="left:206.7px;top:397.34px;font-size:12px;color:#111;transform:scaleX(1.0155);">americaauthority.png</div>
<div class="t" id="t55" style="left:446.2px;top:397.34px;font-size:12px;color:#6d6d6d;transform:scaleX(0.9598);">6/5/2020 12:23 AM</div>
<div class="t" id="t56" style="left:590.2px;top:397.34px;font-size:12px;color:#6d6d6d;transform:scaleX(0.9078);">PNG File</div>
<div class="t" id="t57" style="left:700px;top:397.34px;font-size:12px;color:#6d6d6d;transform:scaleX(0.9600);width:76.5px;text-align:right;transform-origin:100% 0;">3 KB</div>
<div class="t" id="t58" style="left:206.7px;top:418.34px;font-size:12px;color:#111;transform:scaleX(0.9762);">partnerscheap.png</div>
<div class="t" id="t59" style="left:446.2px;top:418.34px;font-size:12px;color:#6d6d6d;transform:scaleX(0.9616);">3/10/2020 12:55 AM</div>
<div class="t" id="t60" style="left:590.2px;top:418.34px;font-size:12px;color:#6d6d6d;transform:scaleX(0.9078);">PNG File</div>
<div class="t" id="t61" style="left:700px;top:418.34px;font-size:12px;color:#6d6d6d;transform:scaleX(0.9600);width:76.5px;text-align:right;transform-origin:100% 0;">9 KB</div>
<div class="t" id="t62" style="left:206.7px;top:439.34px;font-size:12px;color:#111;transform:scaleX(1.0250);">formerlord.png</div>
<div class="t" id="t63" style="left:446.2px;top:439.34px;font-size:12px;color:#6d6d6d;transform:scaleX(0.9616);">12/15/2018 4:07 AM</div>
<div class="t" id="t64" style="left:590.2px;top:439.34px;font-size:12px;color:#6d6d6d;transform:scaleX(0.9078);">PNG File</div>
<div class="t" id="t65" style="left:700px;top:439.34px;font-size:12px;color:#6d6d6d;transform:scaleX(0.9600);width:76.5px;text-align:right;transform-origin:100% 0;">2 KB</div>
<div class="t" id="t66" style="left:206.7px;top:460.34px;font-size:12px;color:#111;transform:scaleX(1.0198);">tipsleft.jpg</div>
<div class="t" id="t67" style="left:446.2px;top:460.34px;font-size:12px;color:#6d6d6d;transform:scaleX(0.9495);">4/18/2018 8:55 PM</div>
<div class="t" id="t68" style="left:590.2px;top:460.34px;font-size:12px;color:#6d6d6d;transform:scaleX(0.8584);">JPG File</div>
<div class="t" id="t69" style="left:700px;top:460.34px;font-size:12px;color:#6d6d6d;transform:scaleX(0.9600);width:76.5px;text-align:right;transform-origin:100% 0;">29 KB</div>
<div class="t" id="t70" style="left:69.2px;top:243.54px;font-size:12px;color:#111;transform:scaleX(0.9319);">Videos</div>
<div class="t" id="t71" style="left:69.2px;top:267.54px;font-size:12px;color:#111;transform:scaleX(0.9442);">Local Disk (C:)</div>
<div class="t" id="t72" style="left:77.5px;top:291.54px;font-size:12px;color:#111;transform:scaleX(0.9800);width:70.9px;overflow:hidden;">$WinREAgent</div>
<div class="t" id="t73" style="left:77.5px;top:315.54px;font-size:12px;color:#111;transform:scaleX(0.9265);">PerfLogs</div>
<div class="t" id="t74" style="left:77.5px;top:339.54px;font-size:12px;color:#111;transform:scaleX(0.9800);width:70.9px;overflow:hidden;">Program Files</div>
<div class="t" id="t75" style="left:77.5px;top:363.54px;font-size:12px;color:#111;transform:scaleX(0.9800);width:70.9px;overflow:hidden;">Program Files (x86)</div>
<div class="t" id="t76" style="left:77.5px;top:387.54px;font-size:12px;color:#111;transform:scaleX(0.9800);width:70.9px;overflow:hidden;">ProgramData</div>
<div class="t" id="t77" style="left:77.5px;top:411.54px;font-size:12px;color:#111;transform:scaleX(0.8869);">Users</div>
<div class="t" id="t78" style="left:85.9px;top:435.54px;font-size:12px;color:#111;">admin</div>
<div class="t" id="t79" style="left:92.9px;top:459.54px;font-size:12px;color:#111;">.ms-ad</div>
<div class="t" id="t80" style="left:92.9px;top:483.54px;font-size:12px;color:#111;transform:scaleX(0.9800);width:55.2px;overflow:hidden;">3D Objects</div>
<div class="t" id="t81" style="left:92.9px;top:507.54px;font-size:12px;color:#111;transform:scaleX(0.9807);">AppData</div>
<div class="t" id="t82" style="left:92.9px;top:531.54px;font-size:12px;color:#111;transform:scaleX(0.9797);">Contacts</div>
<div class="t" id="t83" style="left:92.9px;top:555.54px;font-size:12px;color:#111;transform:scaleX(0.9698);">Desktop</div>
<div class="t" id="t84" style="left:92.9px;top:579.54px;font-size:12px;color:#111;transform:scaleX(0.9800);width:55.2px;overflow:hidden;">Documents</div>
<div class="t" id="t85" style="left:92.9px;top:603.54px;font-size:12px;color:#111;transform:scaleX(0.9800);width:55.2px;overflow:hidden;">Downloads</div>
<div class="t" id="t86" style="left:22.6px;top:630.84px;font-size:12px;color:#333;transform:scaleX(0.9667);">7 items</div>
<div class="t" id="t87" style="left:81.3px;top:630.84px;font-size:12px;color:#333;transform:scaleX(0.9663);">1 item selected</div>
<div class="t" id="t88" style="left:166.25px;top:630.84px;font-size:12px;color:#333;transform:scaleX(0.9236);">222 MB</div>
<div class="t" id="t89" style="left:1140.6px;top:275.44px;font-size:12px;color:#fff;transform:scaleX(0.9474);text-shadow:0 0 2px rgba(0,0,40,.35);">VMware</div>
<div class="t" id="t90" style="left:1128.5px;top:290.34px;font-size:12px;color:#fff;transform:scaleX(0.9764);text-shadow:0 0 2px rgba(0,0,40,.35);">Workstatio...</div>
<div class="t" id="t91" style="left:88.3px;top:693.30px;font-size:15px;color:#222;transform:scaleX(0.9579);">Type here to search</div>
<div class="t" id="t92" style="left:1173.4px;top:684.44px;font-size:12px;color:#fff;transform:scaleX(0.9561);">7:40 AM</div>
<div class="t" id="t93" style="left:1166.5px;top:702.84px;font-size:12px;color:#fff;transform:scaleX(0.9507);">10/15/2024</div>
</body></html>
